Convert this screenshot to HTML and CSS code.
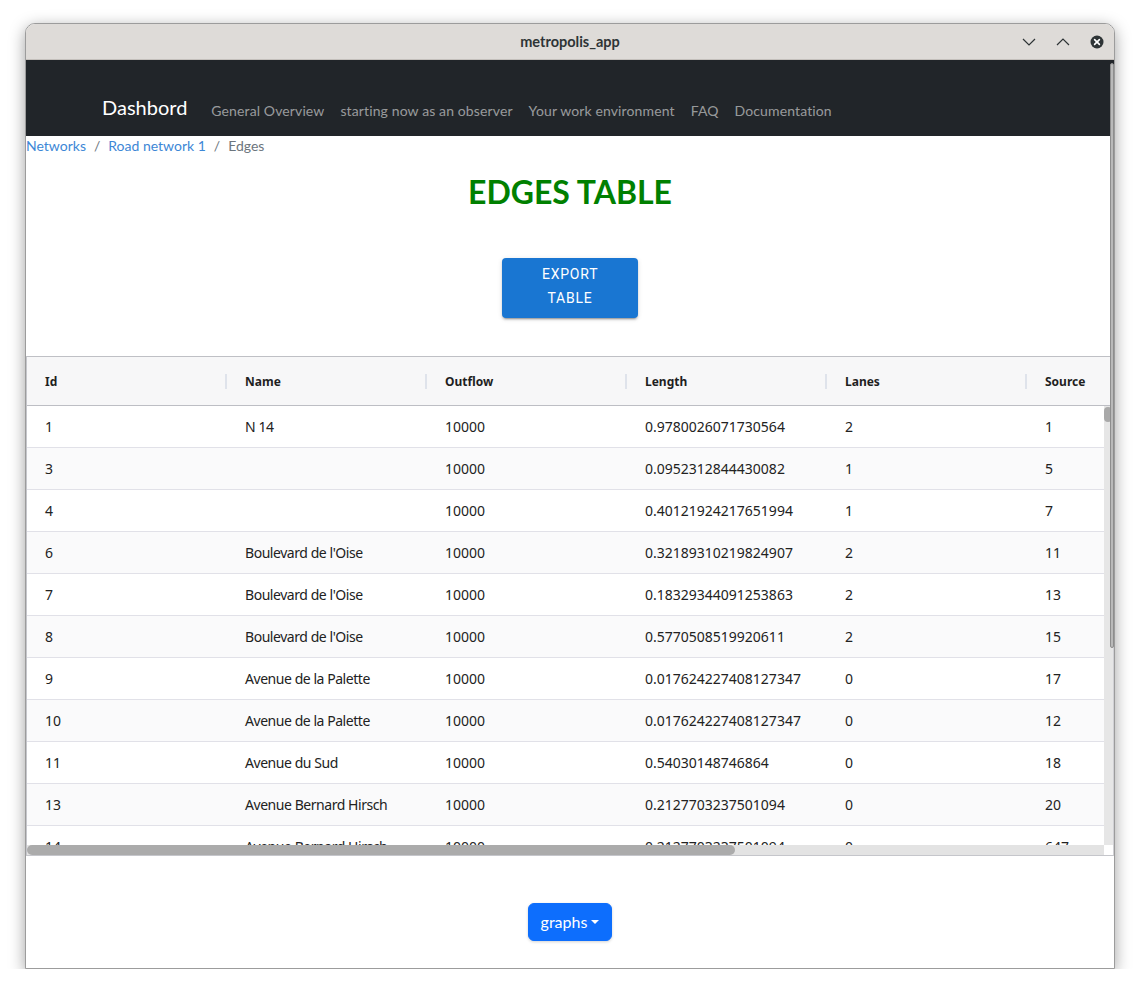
FILE: index.html
```html
<!DOCTYPE html>
<html lang="en">
<head>
<meta charset="utf-8">
<title>metropolis_app</title>
<link rel="stylesheet" href="styles.css">
</head>
<body>
<div class="desktop">
  <div class="window">
    <header class="titlebar">
      <div class="title">metropolis_app</div>
      <div class="controls">
        <span class="ctl"><svg width="16" height="16" viewBox="0 0 16 16"><path d="M2 5 L8 11 L14 5" fill="none" stroke="#2e3436" stroke-width="1.2"/></svg></span>
        <span class="ctl"><svg width="16" height="16" viewBox="0 0 16 16"><path d="M2 11 L8 5 L14 11" fill="none" stroke="#2e3436" stroke-width="1.2"/></svg></span>
        <span class="ctl"><svg width="16" height="16" viewBox="0 0 16 16"><circle cx="8" cy="8" r="6.5" fill="#2e3436"/><path d="M5.6 5.6 L10.4 10.4 M10.4 5.6 L5.6 10.4" stroke="#fff" stroke-width="1.6" stroke-linecap="round"/></svg></span>
      </div>
    </header>
    <div class="page">
      <nav class="navbar">
        <div class="container">
          <a class="brand">Dashbord</a>
          <ul class="nav">
            <li><a class="nav-link">General Overview</a></li>
            <li><a class="nav-link">starting now as an observer</a></li>
            <li><a class="nav-link">Your work environment</a></li>
            <li><a class="nav-link">FAQ</a></li>
            <li><a class="nav-link">Documentation</a></li>
          </ul>
        </div>
      </nav>
      <ol class="breadcrumb">
        <li class="crumb"><a class="crumb-link">Networks</a></li>
        <li class="crumb sep"><a class="crumb-link">Road network 1</a></li>
        <li class="crumb sep active">Edges</li>
      </ol>
      <h1 class="heading">EDGES TABLE</h1>
      <div class="center export-wrap"><button class="export"><span class="export-label">EXPORT TABLE</span></button></div>
      <div class="grid">
        <div class="grid-header">
          <div class="hcell">Id</div><span class="hsep"></span>
          <div class="hcell">Name</div><span class="hsep"></span>
          <div class="hcell">Outflow</div><span class="hsep"></span>
          <div class="hcell">Length</div><span class="hsep"></span>
          <div class="hcell">Lanes</div><span class="hsep"></span>
          <div class="hcell">Source</div>
        </div>
        <div class="grid-body">
          <div class="viewport">
            <div class="row"><div class="cell">1</div><div class="cell name">N 14</div><div class="cell">10000</div><div class="cell">0.9780026071730564</div><div class="cell">2</div><div class="cell">1</div></div>
            <div class="row"><div class="cell">3</div><div class="cell name"></div><div class="cell">10000</div><div class="cell">0.0952312844430082</div><div class="cell">1</div><div class="cell">5</div></div>
            <div class="row"><div class="cell">4</div><div class="cell name"></div><div class="cell">10000</div><div class="cell">0.40121924217651994</div><div class="cell">1</div><div class="cell">7</div></div>
            <div class="row"><div class="cell">6</div><div class="cell name">Boulevard de l'Oise</div><div class="cell">10000</div><div class="cell">0.32189310219824907</div><div class="cell">2</div><div class="cell">11</div></div>
            <div class="row"><div class="cell">7</div><div class="cell name">Boulevard de l'Oise</div><div class="cell">10000</div><div class="cell">0.18329344091253863</div><div class="cell">2</div><div class="cell">13</div></div>
            <div class="row"><div class="cell">8</div><div class="cell name">Boulevard de l'Oise</div><div class="cell">10000</div><div class="cell">0.5770508519920611</div><div class="cell">2</div><div class="cell">15</div></div>
            <div class="row"><div class="cell">9</div><div class="cell name">Avenue de la Palette</div><div class="cell">10000</div><div class="cell">0.017624227408127347</div><div class="cell">0</div><div class="cell">17</div></div>
            <div class="row"><div class="cell">10</div><div class="cell name">Avenue de la Palette</div><div class="cell">10000</div><div class="cell">0.017624227408127347</div><div class="cell">0</div><div class="cell">12</div></div>
            <div class="row"><div class="cell">11</div><div class="cell name">Avenue du Sud</div><div class="cell">10000</div><div class="cell">0.54030148746864</div><div class="cell">0</div><div class="cell">18</div></div>
            <div class="row"><div class="cell">13</div><div class="cell name">Avenue Bernard Hirsch</div><div class="cell">10000</div><div class="cell">0.2127703237501094</div><div class="cell">0</div><div class="cell">20</div></div>
            <div class="row"><div class="cell">14</div><div class="cell name">Avenue Bernard Hirsch</div><div class="cell">10000</div><div class="cell">0.2127703237501094</div><div class="cell">0</div><div class="cell">647</div></div>
          </div>
          <div class="vscroll"><div class="vthumb"></div></div>
        </div>
        <div class="hscroll-row">
          <div class="hscroll"><div class="hthumb"></div></div>
          <div class="corner"></div>
        </div>
      </div>
      <div class="center graphs-wrap"><button class="graphs">graphs<span class="caret"></span></button></div>
      <div class="page-scroll"></div>
    </div>
  </div>
</div>
</body>
</html>
```

FILE: styles.css
```css
* { box-sizing: border-box; }
html, body { margin: 0; padding: 0; background: #ffffff; }
body { font-family: "Lato", "Noto Sans", sans-serif; }

.desktop { padding: 23px 0 0 25px; }

.window {
  width: 1090px;
  height: 946px;
  border: 1px solid #9c9c9c;
  border-radius: 10px 10px 0 0;
  overflow: hidden;
  background: #fff;
  box-shadow: 0 4px 16px rgba(0,0,0,0.38);
  display: flex;
  flex-direction: column;
}

.titlebar {
  height: 36px;
  flex: none;
  background: #dedbd8;
  border-bottom: 1px solid #c3bfbb;
  display: flex;
  align-items: center;
  justify-content: center;
  position: relative;
}
.title {
  font-family: "Lato", sans-serif;
  font-weight: 700;
  font-size: 14.5px;
  color: #2e3436;
}
.controls {
  position: absolute;
  right: 5px;
  top: 0;
  height: 35px;
  display: flex;
  align-items: center;
  gap: 10px;
}
.ctl { width: 24px; height: 24px; display: flex; align-items: center; justify-content: center; }
.ctl svg { display: block; }

.page {
  flex: 1;
  position: relative;
  overflow: hidden;
  background: #fff;
}

.navbar {
  height: 76px;
  background: #212529;
  padding-top: 32px;
}
.container {
  max-width: 960px;
  margin: 0 auto;
  padding: 0 12px;
  display: flex;
  align-items: baseline;
}
.brand {
  font-size: 20px;
  line-height: 30px;
  color: #ffffff;
  margin-right: 16px;
}
.nav { list-style: none; margin: 0; padding: 0; display: flex; align-items: baseline; }
.nav-link {
  display: block;
  padding: 0 8px;
  font-size: 14px;
  letter-spacing: 0.12px;
  line-height: 22px;
  position: relative;
  top: 1px;
  color: rgba(255,255,255,0.55);
}

.breadcrumb {
  list-style: none;
  margin: 0;
  padding: 0;
  display: flex;
  font-size: 14px;
  line-height: 20px;
  color: #6c757d;
}
.crumb-link { color: #3d87d6; }
.crumb.sep { padding-left: 8px; }
.crumb.sep::before { content: "/"; padding-right: 8px; color: #6c757d; }

.heading {
  margin: 16px 0 0;
  text-align: center;
  font-family: "Lato", sans-serif;
  font-weight: 700;
  font-size: 32px;
  line-height: 40px;
  color: #008000;
}

.center { display: flex; justify-content: center; }
.export-wrap { margin-top: 46px; }
.export {
  width: 136px;
  padding: 4px 16px 8px;
  border: 0;
  border-radius: 4px;
  background: #1976d2;
  color: #fff;
  font-family: "Roboto", sans-serif;
  font-weight: 400;
  font-size: 14px;
  line-height: 24px;
  letter-spacing: 0.8px;
  text-transform: uppercase;
  box-shadow: 0 3px 1px -2px rgba(0,0,0,0.2), 0 2px 2px 0 rgba(0,0,0,0.14), 0 1px 5px 0 rgba(0,0,0,0.12);
}
.export-label { display: inline-block; width: min-content; }

.grid {
  margin-top: 38px;
  height: 500px;
  border-top: 1px solid #bfc0c5;
  border-bottom: 1px solid #c5c6cb;
  border-left: 1px solid #c5c6cb;
  border-right: 1px solid #d0d0d4;
  display: flex;
  flex-direction: column;
  font-family: "Noto Sans", sans-serif;
  color: #222;
}
.grid-header {
  height: 49px;
  flex: none;
  background: #f7f7f8;
  border-bottom: 1px solid #bdbec4;
  display: flex;
  align-items: center;
  overflow: hidden;
}
.hcell {
  width: 198px;
  flex: none;
  padding-left: 18px;
  font-size: 12px;
  font-weight: 700;
  color: #1f1f1f;
}
.hsep { width: 2px; height: 15px; flex: none; background: #dfe3eb; }

.grid-body { flex: 1; display: flex; min-height: 0; }
.viewport { flex: 1; overflow: hidden; }
.row {
  display: flex;
  width: 1200px;
  height: 42px;
  border-bottom: 1px solid #e1e1e8;
}
.row:nth-child(even) { background: #fafafb; }
.cell {
  width: 200px;
  flex: none;
  padding-left: 18px;
  font-size: 14px;
  line-height: 41px;
  white-space: nowrap;
}
.cell.name { letter-spacing: -0.45px; }
.vscroll { width: 9px; flex: none; background: #e6e6e6; padding-top: 1px; }
.vthumb { width: 8px; height: 15px; border-radius: 4px; background: #a9a9a9; }

.hscroll-row { height: 10px; flex: none; display: flex; }
.hscroll { flex: 1; background: #e3e3e3; }
.hthumb { width: 708px; height: 10px; border-radius: 5px; background: #ababab; }
.corner { width: 9px; background: #fff; }

.graphs-wrap { margin-top: 47px; }
.graphs {
  display: flex;
  align-items: center;
  padding: 6px 12px;
  border: 1px solid #0d6efd;
  border-radius: 6px;
  background: #0d6efd;
  color: #fff;
  font-family: "Lato", sans-serif;
  font-size: 16px;
  line-height: 24px;
  box-shadow: 0 1px 3px rgba(0,0,0,0.18);
}
.caret {
  margin-left: 4px;
  width: 0;
  height: 0;
  border-top: 4.8px solid #fff;
  border-left: 4.8px solid transparent;
  border-right: 4.8px solid transparent;
}

.page-scroll {
  position: absolute;
  right: 0;
  top: 3px;
  width: 4px;
  height: 585px;
  border-radius: 2px;
  background: #b9b9b9;
  border: 1px solid #8d8d8d;
}
```
